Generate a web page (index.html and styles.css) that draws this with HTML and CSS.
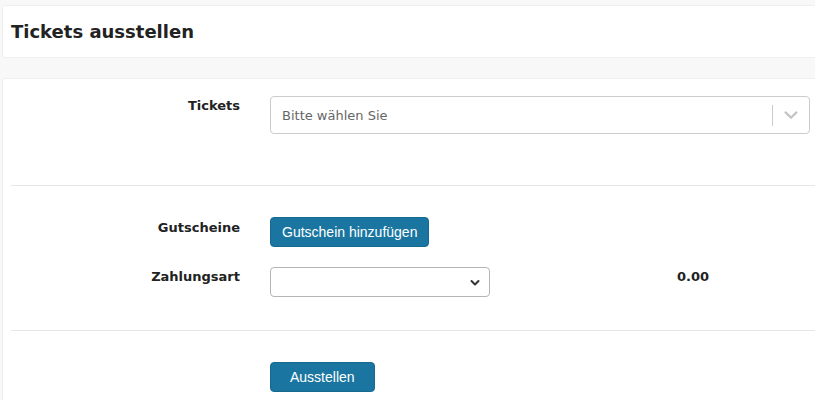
FILE: index.html
```html
<!DOCTYPE html>
<html lang="de">
<head>
<meta charset="utf-8">
<title>Tickets ausstellen</title>
<link rel="stylesheet" href="styles.css">
</head>
<body>
<div class="page">
  <div class="panel header-panel">
    <h1 class="title">Tickets ausstellen</h1>
  </div>
  <div class="panel form-panel">
    <div class="form-row row-tickets">
      <label class="label">Tickets</label>
      <div class="rs-select">
        <span class="rs-placeholder">Bitte wählen Sie</span>
        <span class="rs-sep"></span>
        <span class="rs-arrow">
          <svg width="20" height="20" viewBox="0 0 20 20"><path d="M4.5 7.4 L10 12.6 L15.5 7.4" fill="none" stroke="#c4c4c4" stroke-width="2.2" stroke-linecap="round" stroke-linejoin="round"/></svg>
        </span>
      </div>
    </div>
    <div class="rule"></div>
    <div class="form-row row-vouchers">
      <label class="label">Gutscheine</label>
      <div><button class="btn">Gutschein hinzufügen</button></div>
    </div>
    <div class="form-row row-payment">
      <label class="label">Zahlungsart</label>
      <div class="payment-line">
        <div class="native-select">
          <svg class="native-arrow" width="10" height="8" viewBox="0 0 10 8"><path d="M1.5 2 L5 5.5 L8.5 2" fill="none" stroke="#333" stroke-width="2" stroke-linecap="round" stroke-linejoin="round"/></svg>
        </div>
        <span class="amount">0.00</span>
      </div>
    </div>
    <div class="rule rule-2"></div>
    <div class="form-row row-submit">
      <span></span>
      <div><button class="btn btn-submit">Ausstellen</button></div>
    </div>
  </div>
</div>
</body>
</html>
```
FILE: styles.css
```css
html, body {
  margin: 0;
  padding: 0;
}
body {
  background: #f8f8f8;
  font-family: "DejaVu Sans", Verdana, sans-serif;
  color: #222;
  overflow: hidden;
  height: 400px;
}
.page {
  padding-top: 5px;
  margin-left: 2px;
  margin-right: -20px;
  height: 395px;
  overflow: hidden;
}
.panel {
  background: #fff;
  border: 1px solid #efefef;
  border-radius: 3px;
}
.header-panel {
  height: 51px;
  display: flex;
  align-items: center;
  padding: 0 8px;
}
.title {
  margin: 0;
  font-size: 18px;
  font-weight: bold;
  color: #222;
  line-height: 22px;
  padding-top: 1px;
}
.form-panel {
  margin-top: 20px;
  padding: 17px 8px 20px;
  height: 300px;
}
.form-row {
  display: grid;
  grid-template-columns: 229px 1fr;
  column-gap: 30px;
  align-items: start;
}
.label {
  text-align: right;
  font-size: 13px;
  font-weight: bold;
  line-height: 18px;
  color: #222;
  padding-top: 1px;
}
.row-tickets {
  margin-bottom: 51px;
}
.rs-select {
  width: 538px;
  height: 36px;
  border: 1px solid #ccc;
  border-radius: 4px;
  display: flex;
  align-items: center;
  box-sizing: content-box;
}
.rs-placeholder {
  flex: 1;
  padding-left: 11px;
  font-size: 13px;
  color: #666;
  padding-top: 1px;
}
.rs-sep {
  width: 1px;
  height: 21px;
  background: #ccc;
}
.rs-arrow {
  width: 36px;
  height: 20px;
  display: flex;
  align-items: center;
  justify-content: center;
}
.rule {
  height: 1px;
  background: #e6e6e6;
  margin-bottom: 31px;
}
.rule-2 {
  margin-bottom: 31px;
}
.row-vouchers .label {
  padding-top: 2px;
}
.btn {
  background: #1a76a0;
  color: #fff;
  border: 1px solid #166a90;
  border-radius: 4px;
  font-family: "Liberation Sans", Arial, sans-serif;
  font-size: 14px;
  height: 30px;
  padding: 0 11px;
  line-height: 28px;
  display: block;
  cursor: pointer;
}
.btn-submit {
  padding: 0 19px;
}
.row-payment {
  margin-top: 20px;
  margin-bottom: 33px;
}
.payment-line {
  display: flex;
  align-items: flex-start;
}
.native-select {
  position: relative;
  width: 218px;
  height: 28px;
  border: 1px solid #b5b5b5;
  border-radius: 4px;
  background: #fff;
}
.native-arrow {
  position: absolute;
  right: 9px;
  top: 11px;
}
.amount {
  margin-left: 187px;
  font-size: 13px;
  font-weight: bold;
  line-height: 18px;
  padding-top: 1px;
  color: #222;
}
```
